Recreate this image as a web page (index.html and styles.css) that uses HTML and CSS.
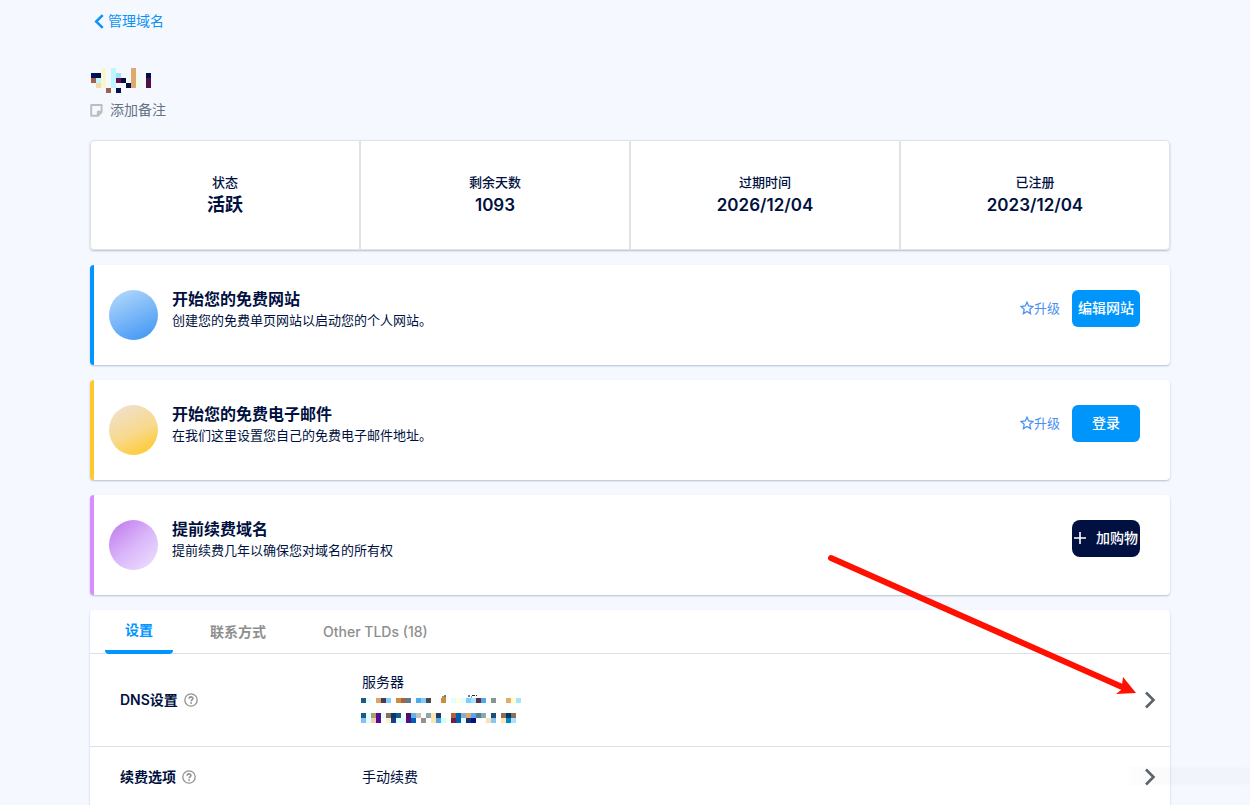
FILE: index.html
```html
<!DOCTYPE html>
<html lang="zh-CN">
<head>
<meta charset="utf-8">
<meta name="viewport" content="width=device-width, initial-scale=1">
<title>管理域名</title>
<link rel="stylesheet" href="styles.css">
</head>
<body>
<main class="page">
  <a class="back" href="#"><svg width="10" height="15" viewBox="0 0 10 15" aria-hidden="true"><path d="M8.7 1.2 2.2 7.5l6.5 6.3" fill="none" stroke="currentColor" stroke-width="2.5"/></svg>管理域名</a>

  <header class="domain">
    <svg class="domain-name" width="60" height="25" viewBox="0 0 12 5" shape-rendering="crispEdges" aria-hidden="true">
      <path fill="#f5f7cf" d="M2 0h1v4H2z"/><path fill="#bff6ff" d="M4 0h1v4H4zM1 2h1v1H1z"/><path fill="#dda96c" d="M8 0h1v4H8z"/>
      <path fill="#000f5c" d="M0 1h1v1H0z"/><path fill="#001045" d="M1 1h1v1H1zM11 1h1v1h-1zM6 2h1v1H6zM7 3h1v1H7zM5 4h1v1H5z"/>
      <path fill="#9fe1ff" d="M5 1h1v1H5z"/><path fill="#f4f9ec" d="M6 1h1v1H6zM9 1h1v3H9z"/>
      <path fill="#a0624b" d="M0 2h1v1H0zM3 4h1v1H3z"/><path fill="#6b1048" d="M5 2h1v1H5z"/><path fill="#4f1048" d="M11 2h1v2h-1z"/><path fill="#f2d9b0" d="M1 3h1v1H1z"/>
    </svg>
    <button class="note" type="button"><svg width="13" height="13" viewBox="0 0 13 13" aria-hidden="true"><path d="M1.2 1h10.400v7L8 11.800H1.200zM11.600 7.800H7.800v4" fill="none" stroke="#bdbdbd" stroke-width="1.900" stroke-linejoin="round"/></svg>添加备注</button>
  </header>

  <section class="stats">
    <div class="stat"><span class="stat-label">状态</span><strong class="stat-value stat-value-cjk">活跃</strong></div>
    <div class="stat"><span class="stat-label">剩余天数</span><strong class="stat-value">1093</strong></div>
    <div class="stat"><span class="stat-label">过期时间</span><strong class="stat-value">2026/12/04</strong></div>
    <div class="stat"><span class="stat-label">已注册</span><strong class="stat-value">2023/12/04</strong></div>
  </section>

  <section class="card card-site">
    <span class="disc"></span>
    <div class="card-text"><h2>开始您的免费网站</h2><p>创建您的免费单页网站以启动您的个人网站。</p></div>
    <div class="actions">
      <a class="upgrade" href="#"><svg width="14" height="14" viewBox="0 0 14 14" aria-hidden="true"><path d="M7 1.2 8.7 5l4.2.5-3.1 2.8.8 4.3L7 10.5l-3.6 2.1.8-4.3L1.1 5.5 5.3 5z" fill="none" stroke="currentColor" stroke-width="1.3"/></svg>升级</a>
      <button class="btn" type="button">编辑网站</button>
    </div>
  </section>

  <section class="card card-mail">
    <span class="disc"></span>
    <div class="card-text"><h2>开始您的免费电子邮件</h2><p>在我们这里设置您自己的免费电子邮件地址。</p></div>
    <div class="actions">
      <a class="upgrade" href="#"><svg width="14" height="14" viewBox="0 0 14 14" aria-hidden="true"><path d="M7 1.2 8.7 5l4.2.5-3.1 2.8.8 4.3L7 10.5l-3.6 2.1.8-4.3L1.1 5.5 5.3 5z" fill="none" stroke="currentColor" stroke-width="1.3"/></svg>升级</a>
      <button class="btn" type="button">登录</button>
    </div>
  </section>

  <section class="card card-renew">
    <span class="disc"></span>
    <div class="card-text"><h2>提前续费域名</h2><p>提前续费几年以确保您对域名的所有权</p></div>
    <div class="actions">
      <button class="btn btn-dark" type="button"><svg width="12" height="12" viewBox="0 0 12 12" aria-hidden="true"><path d="M6 0v12M0 6h12" stroke="currentColor" stroke-width="1.6"/></svg>加购物</button>
    </div>
  </section>

  <section class="settings">
    <nav class="tabs">
      <button class="tab tab-active" type="button">设置</button>
      <button class="tab" type="button">联系方式</button>
      <button class="tab" type="button">Other TLDs (18)</button>
    </nav>
    <div class="row row-dns">
      <h3>DNS设置<svg width="14" height="14" viewBox="0 0 14 14" aria-hidden="true"><circle cx="7" cy="7" r="6.2" fill="none" stroke="#929292" stroke-width="1.3"/><path d="M5.2 5.7c0-2.4 3.7-2.3 3.7-.2 0 1.3-1.8 1.4-1.8 2.7" fill="none" stroke="#929292" stroke-width="1.6"/><circle cx="7.1" cy="10" r=".9" fill="#929292"/></svg></h3>
      <div class="value">
        <span>服务器</span>
        <svg class="servers" width="160" height="28" viewBox="0 0 160 28" shape-rendering="crispEdges" aria-hidden="true">
          <g id="servers"></g>
          <path fill="#c98d42" d="M81 1h4v2h-4z"/><path fill="#567d93" d="M83 0h2v2h-2zM107 0h2v2h-2z"/><path fill="#1f2d50" d="M111 0h3v1h-3zM115 0h1v1h-1z"/><path fill="#84a9b8" d="M110 1h1v2h-1z"/>
        </svg>
      </div>
      <button class="open" type="button" aria-label="DNS设置"><svg width="12" height="18" viewBox="0 0 12 18" aria-hidden="true"><path d="m2 1.500 7.500 7.500L2 16.500" fill="none" stroke="currentColor" stroke-width="2.600"/></svg></button>
    </div>
    <div class="row">
      <h3>续费选项<svg width="14" height="14" viewBox="0 0 14 14" aria-hidden="true"><circle cx="7" cy="7" r="6.2" fill="none" stroke="#929292" stroke-width="1.3"/><path d="M5.2 5.7c0-2.4 3.7-2.3 3.7-.2 0 1.3-1.8 1.4-1.8 2.7" fill="none" stroke="#929292" stroke-width="1.6"/><circle cx="7.1" cy="10" r=".9" fill="#929292"/></svg></h3>
      <div class="value"><span>手动续费</span></div>
      <button class="open" type="button" aria-label="续费选项"><svg width="12" height="18" viewBox="0 0 12 18" aria-hidden="true"><path d="m2 1.500 7.500 7.500L2 16.500" fill="none" stroke="currentColor" stroke-width="2.600"/></svg></button>
    </div>
  </section>
</main>
<svg class="pointer" width="310" height="144" viewBox="0 0 310 144" aria-hidden="true"><path d="M4 5 294 133.500" fill="none" stroke="#ff1000" stroke-width="6" stroke-linecap="round"/><path d="m309 140-13-16-1 8-1 5-5 4z" fill="#ff1000"/></svg>
<div class="smudge"></div>
<script src="servers.js"></script>
</body>
</html>
```
FILE: styles.css
```css
* { box-sizing: border-box; }
body {
  margin: 0;
  position: relative;
  background: #f5f8ff;
  color: #001040;
  font: 14px/20px Inter, "Noto Sans CJK SC", sans-serif;
}
svg { display: block; flex: none; }
button { font: inherit; border: 0; background: none; padding: 0; cursor: pointer; }
a { text-decoration: none; }
h2, h3, p { margin: 0; }

.page {
  display: flex;
  flex-direction: column;
  gap: 15px;
  min-height: 100vh;
  padding: 11px 80px 0 90px;
}
.back {
  display: flex;
  align-items: center;
  align-self: flex-start;
  gap: 4px;
  padding-left: 4px;
  height: 20px;
  color: #0b93f5;
}
.domain { padding-top: 22px; height: 79px; }
.note {
  display: flex;
  align-items: center;
  gap: 7px;
  margin-top: 7px;
  color: #66727f;
}
.domain-name { margin-left: 1px; }

.stats, .card, .settings {
  background: #fff;
  border-radius: 4px;
  box-shadow: 0 1px 2px #b4bfce;
}
.stats {
  display: grid;
  grid-template-columns: repeat(4, 1fr);
  height: 110px;
}
.stat {
  display: flex;
  flex-direction: column;
  align-items: center;
  padding-top: 30px;
  border: 1px solid #e1e3e6;
}
.stat:first-child { border-radius: 4px 0 0 4px; }
.stat:last-child { border-radius: 0 4px 4px 0; }
.stat-label { font-size: 13px; font-weight: 500; line-height: 22px; }
.stat-value { font-size: 17px; font-weight: 600; line-height: 24px; }
.stat-value-cjk { font-size: 18px; font-weight: 700; }

.card {
  display: flex;
  align-items: flex-start;
  height: 100px;
  padding: 24px 30px 0 15px;
  border-left: 4px solid;
}
.card-site { border-color: #0095ff; }
.card-mail { border-color: #ffc82c; }
.card-renew { border-color: #d98cff; }
.disc { width: 49px; height: 50px; margin-top: 1px; border-radius: 50%; flex: none; }
.card-site .disc { background: linear-gradient(155deg, #b3d8fb 5%, #4096f5 95%); }
.card-mail .disc { background: linear-gradient(155deg, #f0e0d2 5%, #f8d98b 55%, #ffc827 95%); }
.card-renew .disc { background: linear-gradient(140deg, #c27eed 8%, #d9b5fa 50%, #ecdfff 95%); }
.card-text { flex: 1; padding-left: 14px; }
.card-text h2 { font-size: 16px; font-weight: 700; line-height: 20px; }
.card-text p { font-size: 13px; line-height: 22px; }
.actions { display: flex; align-items: center; gap: 12px; margin-top: 1px; }
.upgrade { display: flex; align-items: center; padding-bottom: 2px; color: #4a91f2; font-size: 13px; }
.btn {
  display: flex;
  align-items: center;
  justify-content: center;
  gap: 10px;
  width: 68px;
  height: 37px;
  padding-bottom: 2px;
  border-radius: 6px;
  background: #0095fb;
  color: #fff;
  font-weight: 500;
  white-space: nowrap;
}
.btn-dark { background: #001040; border-radius: 8px; }

.settings { flex: 1; border-radius: 4px 4px 0 0; }
.tabs {
  display: flex;
  height: 44px;
  padding-left: 15px;
  border-bottom: 1px solid #d8e1ea;
}
.tab {
  padding: 0 37px;
  height: 44px;
  color: #8e8e8e;
  font-weight: 600;
}
.tab + .tab + .tab { padding-left: 20px; font-weight: 500; }
.tab-active {
  position: relative;
  width: 68px;
  padding: 0 0 4px;
  color: #0095ff;
}
.tab-active::after {
  content: "";
  position: absolute;
  left: 0;
  right: 0;
  bottom: 0;
  height: 4px;
  border-radius: 0 0 4px 4px;
  background: #0095ff;
}
.row {
  display: flex;
  align-items: center;
  min-height: 60px;
  padding: 0 14px 0 30px;
}
.row-dns { min-height: 93px; border-bottom: 1px solid #d8e1ea; }
.row h3 {
  display: flex;
  align-items: center;
  gap: 6px;
  width: 241px;
  font-size: 14px;
  font-weight: 600;
}
.value { flex: 1; }
.value span { display: block; padding-left: 1px; }
.servers { margin: 3px 0 6px; }
.open { color: #5c626b; }

.pointer { position: absolute; left: 827px; top: 553px; pointer-events: none; }
.smudge {
  position: absolute;
  right: 0;
  top: 768px;
  width: 126px;
  height: 16px;
  background: linear-gradient(90deg, transparent, rgba(90, 100, 110, 0.03) 20%);
  box-shadow: 0 0 4px rgba(90, 100, 110, 0.02);
  pointer-events: none;
}
```
FILE: servers.js
```js
// Each entry: [top offset, colours of consecutive 5px blocks; "-" leaves a gap]
const strips = [
  [3, "24597c e0ffff - dda35f 4b3a54 82cbff - c98d42 a9633f 567d93 - 55a8e6 82cbff 444b50 - - c98d42 - e0ffff ffffe0 e0ffff 82cbff a4e4ff 5b3049 55a8e6 - 8b9494 - - e5ab6b ffffcc a4e4ff"],
  [18, "1a5a8a e0ffff a9a070 520e8e ddffff 8d6d5b 003a6b 1a5a8a - 500e60 5fb3e8 c0c0c0 - 84a9b8 ffe6b0 1f3d66 - - a9633f 0060b0 8fa8d0 dda96c 55a8e6 567d93 84a9b8 - 1a5078 - 8d6d5b 003a60 8d6d5b"],
  [23, "82c3f5 e0ffff f0d0b0 520e8e - fff0c8 154090 ddffff ddffff 520e8e 0060b0 - 9b9090 - ffe6b0 55a8e6 ccffff ffffee 6b2050 0060b0 e0ffff 1f2d70 001088 - - ffe0b8 84c8f5 - ffe6b8 0088c8 a4e4ff"]
];
const group = document.getElementById("servers");
for (const [top, colours] of strips) {
  colours.split(" ").forEach((colour, i) => {
    if (colour === "-") return;
    const block = document.createElementNS("http://www.w3.org/2000/svg", "rect");
    block.setAttribute("x", i * 5);
    block.setAttribute("y", top);
    block.setAttribute("width", 5);
    block.setAttribute("height", 5);
    block.setAttribute("fill", "#" + colour);
    group.append(block);
  });
}
```
